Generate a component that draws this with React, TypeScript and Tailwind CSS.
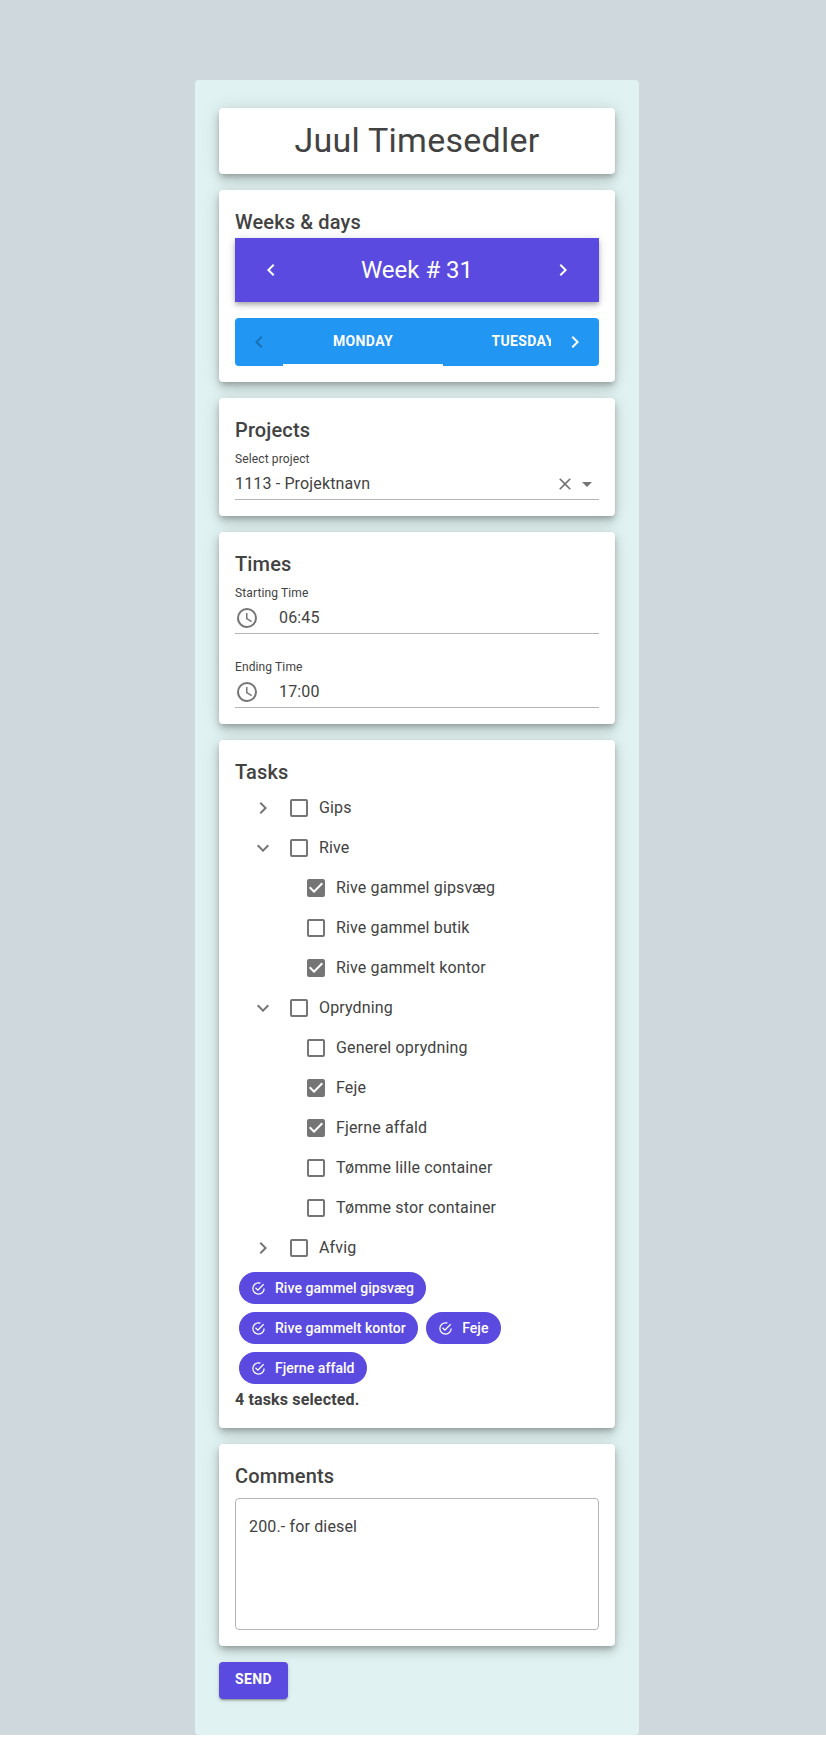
import type { ReactNode } from "react";

const icons = {
  left: "M15.41,16.58L10.83,12L15.41,7.41L14,6L8,12L14,18L15.41,16.58Z",
  right: "M8.59,16.58L13.17,12L8.59,7.41L10,6L16,12L10,18L8.59,16.58Z",
  down: "M7.41,8.58L12,13.17L16.59,8.58L18,10L12,16L6,10L7.41,8.58Z",
  close:
    "M19,6.41L17.59,5L12,10.59L6.41,5L5,6.41L10.59,12L5,17.59L6.41,19L12,13.41L17.59,19L19,17.59L13.41,12L19,6.41Z",
  caret: "M7,10L12,15L17,10H7Z",
  clock:
    "M12,20A8,8 0 0,0 20,12A8,8 0 0,0 12,4A8,8 0 0,0 4,12A8,8 0 0,0 12,20M12,2A10,10 0 0,1 22,12A10,10 0 0,1 12,22C6.47,22 2,17.5 2,12A10,10 0 0,1 12,2M12.5,7V12.25L17,14.92L16.25,16.15L11,13V7H12.5Z",
  blank:
    "M19,3H5C3.89,3 3,3.89 3,5V19A2,2 0 0,0 5,21H19A2,2 0 0,0 21,19V5C21,3.89 20.1,3 19,3M19,5V19H5V5H19Z",
  marked:
    "M10,17L5,12L6.41,10.58L10,14.17L17.59,6.58L19,8M19,3H5C3.89,3 3,3.89 3,5V19A2,2 0 0,0 5,21H19A2,2 0 0,0 21,19V5C21,3.89 20.1,3 19,3Z",
  done: "M20,12A8,8 0 0,1 12,20A8,8 0 0,1 4,12A8,8 0 0,1 12,4C12.76,4 13.5,4.11 14.2,4.31L15.77,2.74C14.61,2.26 13.34,2 12,2A10,10 0 0,0 2,12A10,10 0 0,0 12,22A10,10 0 0,0 22,12M7.91,10.08L6.5,11.5L11,16L21,6L19.59,4.58L11,13.17L7.91,10.08Z",
};

function Icon({ name, className = "size-6" }: { name: keyof typeof icons; className?: string }) {
  return (
    <svg viewBox="0 0 24 24" fill="currentColor" className={`shrink-0 ${className}`} aria-hidden="true">
      <path d={icons[name]} />
    </svg>
  );
}

function Card({ title, children }: { title: string; children: ReactNode }) {
  return (
    <section className="rounded bg-white p-4 shadow-[0_3px_5px_-1px_rgba(0,0,0,0.2),0_6px_10px_0_rgba(0,0,0,0.14),0_1px_18px_0_rgba(0,0,0,0.12)]">
      <h2 className="text-xl leading-8 font-medium tracking-[0.007em]">{title}</h2>
      {children}
    </section>
  );
}

function TimeField({ label, value }: { label: string; value: string }) {
  return (
    <div className="flex h-[54px] flex-col border-b border-[#b4b4b4]">
      <span className="pt-[5px] text-xs leading-4 tracking-[0.01em]">{label}</span>
      <div className="flex h-[31px] items-center gap-5 pt-[3px]">
        <Icon name="clock" className="size-6 text-[#757575]" />
        <span>{value}</span>
      </div>
    </div>
  );
}

type Task = { label: string; open?: boolean; child?: boolean; checked?: boolean };

const tasks: Task[] = [
  { label: "Gips" },
  { label: "Rive", open: true },
  { label: "Rive gammel gipsvæg", child: true, checked: true },
  { label: "Rive gammel butik", child: true },
  { label: "Rive gammelt kontor", child: true, checked: true },
  { label: "Oprydning", open: true },
  { label: "Generel oprydning", child: true },
  { label: "Feje", child: true, checked: true },
  { label: "Fjerne affald", child: true, checked: true },
  { label: "Tømme lille container", child: true },
  { label: "Tømme stor container", child: true },
  { label: "Afvig" },
];

function TaskRow({ label, open, child, checked }: Task) {
  return (
    <li className={`flex h-10 items-center ${child ? "pl-[69px]" : "pl-4"}`}>
      {!child && <Icon name={open ? "down" : "right"} className="mr-3 size-6 text-[#757575]" />}
      <Icon name={checked ? "marked" : "blank"} className="mr-2 size-6 text-[#757575]" />
      <span>{label}</span>
    </li>
  );
}

export default function App() {
  const selected = tasks.filter((t) => t.checked);
  return (
    <div className="min-h-[1751px] bg-white font-['Roboto',sans-serif] text-base leading-6 tracking-[0.009375em] text-[#424242]">
      <div className="flex h-[1735px] bg-[#cfd8dc] pt-20 pl-[195px]">
        <main className="flex w-[444px] flex-col gap-4 rounded bg-[#e0f2f1] px-6 pt-7">
          <header className="flex h-[66px] justify-center rounded bg-white pt-3 shadow-[0_3px_5px_-1px_rgba(0,0,0,0.2),0_6px_10px_0_rgba(0,0,0,0.14),0_1px_18px_0_rgba(0,0,0,0.12)]">
            <h1 className="text-[34px] leading-10 tracking-[0.0073em]">Juul Timesedler</h1>
          </header>

          <Card title="Weeks & days">
            <div className="flex h-16 items-center justify-between bg-[#5a4ae0] px-6 text-white shadow-[0_2px_4px_-1px_rgba(0,0,0,0.2),0_4px_5px_0_rgba(0,0,0,0.14),0_1px_10px_0_rgba(0,0,0,0.12)]">
              <Icon name="left" />
              <span className="text-2xl leading-8 tracking-normal">Week # 31</span>
              <Icon name="right" />
            </div>
            <div className="mt-4 flex h-12 rounded bg-[#2196f3] text-sm font-bold tracking-[0.025em] text-white">
              <div className="flex w-12 shrink-0 items-center justify-center text-[#1a6fb3]">
                <Icon name="left" />
              </div>
              <div className="flex min-w-0 flex-1 overflow-hidden">
                <div className="flex w-40 shrink-0 items-center justify-center border-b-2 border-white">MONDAY</div>
                <div className="flex w-40 shrink-0 items-center justify-center pb-0.5">TUESDAY</div>
              </div>
              <div className="flex w-12 shrink-0 items-center justify-center">
                <Icon name="right" />
              </div>
            </div>
          </Card>

          <Card title="Projects">
            <div className="flex h-[54px] flex-col border-b border-[#b4b4b4]">
              <span className="pt-[5px] text-xs leading-4 tracking-[0.01em]">Select project</span>
              <div className="flex h-[31px] items-center pt-[3px]">
                <span className="flex-1">1113 - Projektnavn</span>
                <Icon name="close" className="size-5 text-[#757575]" />
                <Icon name="caret" className="size-6 text-[#757575]" />
              </div>
            </div>
          </Card>

          <Card title="Times">
            <div className="flex flex-col gap-5">
              <TimeField label="Starting Time" value="06:45" />
              <TimeField label="Ending Time" value="17:00" />
            </div>
          </Card>

          <Card title="Tasks">
            <ul>
              {tasks.map((t) => (
                <TaskRow key={t.label} {...t} />
              ))}
            </ul>
            <div className="flex w-[300px] flex-wrap gap-2 p-1">
              {selected.map((t) => (
                <span
                  key={t.label}
                  className="flex h-8 items-center gap-[9.5px] rounded-full bg-[#5a4ae0] pr-[12.5px] pl-[11.5px] text-sm font-medium tracking-[0.05px] text-white"
                >
                  <Icon name="done" className="size-[15px]" />
                  {t.label}
                </span>
              ))}
            </div>
            <p className="font-bold">{selected.length} tasks selected.</p>
          </Card>

          <Card title="Comments">
            <div className="mt-1.5 h-[132px] rounded border border-[#b4b4b4] px-[13px] py-4">200.- for diesel</div>
          </Card>

          <button className="flex h-[37px] w-[69px] items-center justify-center rounded bg-[#5a4ae0] pb-[3px] text-sm font-bold tracking-[0.025em] text-white shadow-[0_3px_1px_-2px_rgba(0,0,0,0.2),0_2px_2px_0_rgba(0,0,0,0.14),0_1px_5px_0_rgba(0,0,0,0.12)]">
            SEND
          </button>
        </main>
      </div>
    </div>
  );
}
